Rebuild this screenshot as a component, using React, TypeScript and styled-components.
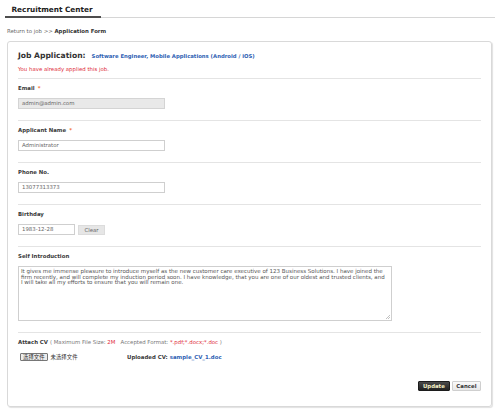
import styled, { createGlobalStyle } from 'styled-components';

const GlobalStyle = createGlobalStyle`
  body {
    margin: 0;
    background: #fff;
    font-family: 'DejaVu Sans', Verdana, sans-serif;
    color: #333;
  }
`;

const Page = styled.div`
  width: 500px;
  height: 417px;
  overflow: hidden;
`;

const HeaderBar = styled.div`
  display: flex;
  margin: 0 5px;
  padding-top: 4px;
  border-bottom: 1px solid #d6d6d6;
`;

const HeaderTab = styled.div`
  font-size: 7.3px;
  font-weight: bold;
  line-height: 11px;
  color: #222;
  padding: 0 8px 1px 6.5px;
  border-bottom: 2px solid #4d4d4d;
  margin-bottom: -1px;
`;

const Breadcrumb = styled.div`
  margin-top: 9px;
  padding-left: 7px;
  font-size: 5.4px;
  line-height: 8px;
  color: #666;

  b {
    color: #333;
  }
`;

const Panel = styled.div`
  margin: 6px 8px 0 7px;
  height: 364px;
  border: 1px solid #d9d9d9;
  border-radius: 3px;
  box-shadow: 1px 1px 1px rgba(0, 0, 0, 0.12);
  padding: 0 10px;
`;

const TitleBlock = styled.div`
  padding: 9px 0 5px;
  border-bottom: 1px solid #e4e4e4;
`;

const Title = styled.div`
  display: flex;
  align-items: baseline;
  gap: 6px;
  line-height: 10px;
`;

const TitleMain = styled.span`
  font-size: 7.6px;
  font-weight: bold;
  color: #333;
`;

const TitleJob = styled.span`
  font-size: 5.3px;
  font-weight: bold;
  color: #2f5fb3;
`;

const Notice = styled.div`
  margin-top: 4px;
  font-size: 5.4px;
  line-height: 8px;
  color: #e02d3a;
`;

const Field = styled.div<{ $last?: boolean }>`
  padding: 5px 0 ${(p) => (p.$last ? '0' : '11px')};
  border-bottom: ${(p) => (p.$last ? 'none' : '1px solid #e4e4e4')};
`;

const Label = styled.div`
  font-size: 5.4px;
  font-weight: bold;
  line-height: 8px;
  color: #3a3a3a;
`;

const Required = styled.span`
  color: #f26522;
  margin-left: 3px;
`;

const Note = styled.span`
  font-weight: normal;
  color: #777;
`;

const Red = styled.span`
  font-weight: normal;
  color: #e02d3a;
`;

const Input = styled.div<{ $disabled?: boolean; $width?: number }>`
  margin-top: 6px;
  width: ${(p) => p.$width ?? 147}px;
  height: 11px;
  box-sizing: border-box;
  border: 1px solid ${(p) => (p.$disabled ? '#d4d4d4' : '#cfcfcf')};
  background: ${(p) => (p.$disabled ? '#e9e9e9' : '#fff')};
  padding-left: 3px;
  font-size: 5.4px;
  line-height: 9px;
  color: #666;
`;

const InlineRow = styled.div`
  display: flex;
  align-items: center;
  gap: 3px;
  margin-top: 6px;

  ${Input} {
    margin-top: 0;
  }
`;

const SmallButton = styled.div`
  width: 27px;
  height: 10px;
  box-sizing: border-box;
  background: #e6e6e6;
  border: 1px solid #dcdcdc;
  font-size: 5.4px;
  line-height: 8px;
  text-align: center;
  color: #666;
`;

const TextArea = styled.div`
  margin-top: 6px;
  width: 374px;
  height: 55px;
  box-sizing: border-box;
  border: 1px solid #cfcfcf;
  padding: 2px 2px;
  font-size: 5.5px;
  line-height: 5.5px;
  color: #555;
  white-space: pre-line;
  position: relative;
`;

const Grip = styled.svg`
  position: absolute;
  right: 1px;
  bottom: 1px;
`;

const FileRow = styled.div`
  display: flex;
  align-items: center;
  margin-top: 6px;
  height: 9px;
`;

const FileBox = styled.div`
  display: flex;
  align-items: center;
  gap: 3px;
  width: 107px;
  height: 9px;
  padding-left: 2px;
  box-sizing: border-box;
  font-family: 'Noto Sans CJK SC', 'DejaVu Sans', sans-serif;
  font-size: 5.4px;
  color: #333;
`;

const FileButton = styled.div`
  height: 8px;
  padding: 0 2px;
  box-sizing: border-box;
  border: 1px solid #777;
  border-radius: 1px;
  background: #ececec;
  line-height: 6px;
`;

const Uploaded = styled.div`
  margin-left: 2px;
  font-size: 5.4px;
  font-weight: bold;
  color: #3a3a3a;

  span {
    color: #2f5fb3;
    margin-left: 2px;
  }
`;

const Actions = styled.div`
  display: flex;
  justify-content: flex-end;
  gap: 2px;
  margin-top: 19.5px;
`;

const ActionButton = styled.div<{ $primary?: boolean }>`
  height: 10px;
  padding: 0 ${(p) => (p.$primary ? '4px' : '3.5px')};
  box-sizing: border-box;
  border: 1px solid ${(p) => (p.$primary ? '#1c1c1c' : '#cfcfcf')};
  border-radius: 1px;
  background: ${(p) => (p.$primary ? 'linear-gradient(#4a4a4a, #222)' : 'linear-gradient(#fafafa, #e8e8e8)')};
  color: ${(p) => (p.$primary ? '#f6f2c8' : '#333')};
  font-size: 5.4px;
  font-weight: bold;
  line-height: 8px;
`;

const intro = [
  'It gives me immense pleasure to introduce myself as the new customer care executive of 123 Business Solutions. I have joined the',
  'firm recently, and will complete my induction period soon. I have knowledge, that you are one of our oldest and trusted clients, and',
  'I will take all my efforts to ensure that you will remain one.',
].join('\n');

export default function App() {
  return (
    <>
      <GlobalStyle />
      <Page>
        <HeaderBar>
          <HeaderTab>Recruitment Center</HeaderTab>
        </HeaderBar>
        <Breadcrumb>
          Return to job &gt;&gt; <b>Application Form</b>
        </Breadcrumb>

        <Panel>
          <TitleBlock>
            <Title>
              <TitleMain>Job Application:</TitleMain>
              <TitleJob>Software Engineer, Mobile Applications (Android / iOS)</TitleJob>
            </Title>
            <Notice>You have already applied this job.</Notice>
          </TitleBlock>

          <Field>
            <Label>
              Email<Required>*</Required>
            </Label>
            <Input $disabled>admin@admin.com</Input>
          </Field>

          <Field>
            <Label>
              Applicant Name<Required>*</Required>
            </Label>
            <Input>Administrator</Input>
          </Field>

          <Field>
            <Label>Phone No.</Label>
            <Input>13077313373</Input>
          </Field>

          <Field>
            <Label>Birthday</Label>
            <InlineRow>
              <Input $width={57}>1983-12-28</Input>
              <SmallButton>Clear</SmallButton>
            </InlineRow>
          </Field>

          <Field>
            <Label>Self Introduction</Label>
            <TextArea>
              {intro}
              <Grip width="5" height="5" viewBox="0 0 5 5">
                <path d="M1 5 L5 1 M3 5 L5 3" stroke="#999" strokeWidth="0.6" />
              </Grip>
            </TextArea>
          </Field>

          <Field $last>
            <Label>
              Attach CV <Note>( Maximum File Size: </Note>
              <Red>2M</Red>
              <Note>&nbsp;&nbsp; Accepted Format: </Note>
              <Red>*.pdf;*.docx;*.doc</Red>
              <Note> )</Note>
            </Label>
            <FileRow>
              <FileBox>
                <FileButton>选择文件</FileButton>
                未选择文件
              </FileBox>
              <Uploaded>
                Uploaded CV:<span>sample_CV_1.doc</span>
              </Uploaded>
            </FileRow>
            <Actions>
              <ActionButton $primary>Update</ActionButton>
              <ActionButton>Cancel</ActionButton>
            </Actions>
          </Field>
        </Panel>
      </Page>
    </>
  );
}
